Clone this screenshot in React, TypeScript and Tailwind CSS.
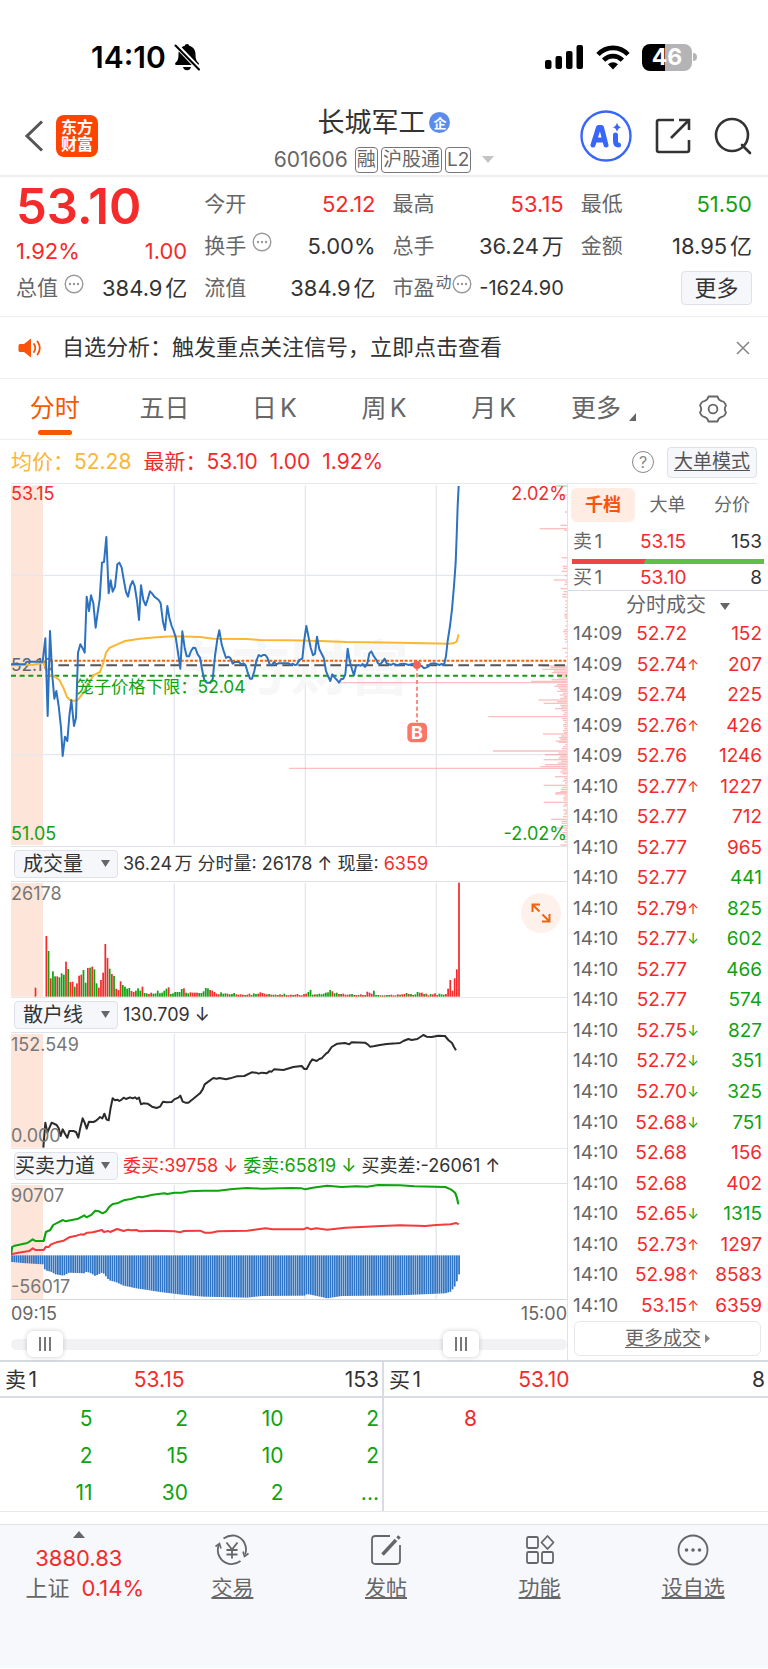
import React from "react";

type Point = [number, number];

const RED = "text-[#f52a2a]";
const GREEN = "text-[#0fa30f]";

const toPoints = (data: string) => data.trim().replace(/\s+/g, " ");

const parse = (data: string): Point[] =>
  data
    .trim()
    .split(/\s+/)
    .map((p) => p.split(",").map(Number) as Point);

const priceLine = `33,565 75,565 80,557 128,557 136,487 143,720 150,465 157,600 163,668 169,645 176,690 183,755 188,840
195,782 202,795 208,720 214,672 222,750 228,725 234,530 241,505 247,515 254,530 260,362 267,405 273,358 280,382 287,455
293,410 299,370 306,260 312,258 319,183 326,352 332,313 338,347 345,332 352,265 358,260 365,275 371,310 378,348 384,362
391,330 398,315 404,330 411,375 417,432 423,328 430,372 437,388 443,370 450,346 456,352 463,362 476,372 482,382 489,438
495,462 502,390 508,425 515,450 521,465 527,483 534,530 541,578 547,466 554,515 560,541 567,541 573,525 580,515 586,516
593,535 600,545 606,580 613,612 620,620 630,620 638,610 645,540 652,490 658,463 665,505 671,525 678,546 685,542 691,546
698,563 704,558 717,558 724,565 730,562 737,568 743,590 750,608 756,608 763,585 769,555 776,537 783,541 789,537 796,537
802,545 809,565 815,568 822,558 829,565 835,562 866,562 872,567 878,563 884,567 890,566 898,552 907,548 913,490 919,450
926,485 932,515 939,538 945,533 951,482 958,520 971,545 978,585 984,600 991,615 997,595 1004,605 1011,612 1017,620
1023,610 1030,608 1036,595 1043,518 1049,555 1056,580 1062,598 1068,570 1075,567 1082,569 1088,564 1095,573 1102,562
1108,532 1114,526 1121,540 1128,550 1134,562 1140,565 1147,558 1154,548 1160,562 1173,567 1180,563 1193,568 1200,564
1213,563 1226,567 1240,563 1251,567 1265,570 1272,577 1285,572 1292,563 1305,562 1318,567 1325,564 1332,567 1338,540
1343,495 1350,450 1356,400 1362,330 1367,260 1370,180 1373,90 1376,30`;

const averageLine = `33,568 100,566 130,560 150,598 165,602 178,612 190,635 201,663 210,672 222,675 235,670 250,650 265,625
280,598 300,588 310,560 318,530 328,516 350,506 375,495 420,488 470,484 520,481 600,483 640,488 740,489 780,492 870,493
960,495 1040,498 1200,500 1345,503 1360,502 1370,497 1376,475`;

const retailLine = `130,920 136,845 142,875 155,845 170,852 176,862 182,885 188,865 195,878 202,890 208,870 220,870 228,873
235,890 241,860 248,832 254,845 260,863 267,842 280,843 287,840 293,835 300,828 307,832 313,818 320,836 326,838 332,800
338,772 345,778 352,776 358,780 365,776 371,770 378,774 390,769 398,772 405,769 411,774 417,770 423,790 430,787 443,788
456,797 470,801 480,797 489,782 500,784 515,783 523,775 535,770 541,764 548,782 556,785 565,785 580,773 600,757 608,745
614,730 625,722 640,711 650,713 658,711 678,715 690,712 710,706 733,705 755,694 768,695 776,698 785,695 800,697 808,691
815,692 822,685 850,687 880,678 905,675 913,684 920,684 930,665 937,655 950,660 958,654 965,652 978,638 984,634 995,618
1012,608 1035,606 1048,610 1055,604 1095,605 1103,610 1110,617 1120,616 1140,612 1160,609 1190,607 1200,606 1210,600
1225,594 1235,597 1252,594 1270,582 1280,587 1295,588 1315,584 1335,585 1345,597 1356,606 1362,618 1368,628`;

const sellForce = `30,343 33,318 40,314 75,306 90,295 97,300 120,300 126,273 138,267 146,252 160,244 173,237 180,241 215,233
232,223 238,229 252,221 262,209 272,211 282,217 292,211 300,198 310,189 322,187 340,178 360,174 383,167 390,169 420,161
452,157 460,159 480,155 500,155 520,151 560,149 600,149 640,144 680,141 720,143 800,141 830,142 840,145 860,140 900,134
940,138 980,136 1010,137 1040,132 1100,133 1140,136 1225,138 1240,145 1252,155 1257,170 1261,190`;

const buyForce = `30,340 50,335 80,330 90,322 97,327 120,327 126,317 134,318 140,310 155,304 175,299 190,289 210,284 222,280
230,281 240,275 255,274 280,267 286,273 298,270 303,273 322,264 340,270 352,266 360,268 375,267 384,271 430,269 480,271
495,274 505,270 550,269 563,275 580,275 600,271 680,269 700,266 730,262 750,265 835,265 845,260 855,265 870,262 900,266
950,260 1050,255 1100,253 1170,255 1200,252 1240,250 1255,246 1262,250`;

const diffProfile = parse(`33,363 60,366 118,370 124,388 140,392 152,400 175,404 190,395 232,397 238,392 250,397 262,405
282,394 300,418 318,423 340,434 380,443 400,446 440,453 500,461 560,467 680,470 720,465 838,464 845,459 880,467 900,472
940,465 1100,463 1225,457 1240,452 1252,435 1258,418 1263,400`);

const volumes = `182r 137g 55r 76g 61g 61r 58g 70g 66g 105r 83g 44r 45r 30g 40r 63r 66r 80g 42g 86r 87g 90r 82g 40g 27r 50r
72r 158r 116r 84g 68r 62g 24r 20r 46r 35g 30g 24g 26g 17r 14r 18g 25g 18g 30r 11g 10g 8r 12r 9g 10g 18g 10g 12g 18g 24g
28r 8g 10g 14g 14g 14g 23g 25r 12g 10g 13r 12r 12r 12r 11g 11g 16g 26g 25g 20r 18r 14r 9r 7r 13g 9g 10g 9r 7g 8g 11g 7r
6r 7r 6r 5g 6r 9r 5g 10g 8g 9r 13r 11r 9r 7r 8g 6r 6g 6r 5g 7r 5r 9g 5r 4r 6r 5g 6r 8r 5r 4r 8r 9r 14g 20g 6g 7r 7g 9g
7g 9g 12g 13g 20g 16r 10g 12g 8r 8g 9r 6r 6r 7g 8g 5r 5r 5g 7r 5r 5g 15r 12r 9r 18g 5g 5g 4r 4g 4r 5g 5g 6r 4r 4g 7r 6g
7r 8r 11g 8r 8g 5r 7g 14g 12r 12r 8g 9r 4r 8g 7r 10r 5r 9g 7g 6g 8r 24r 50r 18r 55r 82r 342r`
  .trim()
  .split(/\s+/);

// price distribution on the right edge of the main chart: y, length
const chips = parse(`57,33 108,6 148,20 158,82 163,8 245,16 271,12 277,12 286,16 299,6 312,40 318,5 325,8 338,20 347,10 355,14
363,14 375,5 385,4 395,6 405,5 415,8 420,8 426,6 436,4 450,5 461,9 467,12 474,8 482,6 490,8 498,5 517,14 530,6 542,5
570,75 575,50 580,74 585,40 590,46 595,30 600,22 606,26 611,46 616,108 620,678 626,30 631,38 636,26 641,20 646,30 652,12
657,22 662,10 667,20 672,86 677,30 682,70 688,20 693,18 698,36 704,16 710,8 716,12 722,236 728,14 734,12 740,6 746,12
752,10 758,8 764,12 770,10 774,72 780,18 785,24 790,20 795,34 799,26 806,6 812,12 818,16 825,222 831,26 836,66 841,20
846,26 851,70 856,18 861,28 866,66 872,80 877,834 882,16 888,20 893,14 902,36 908,8 914,12 921,6 928,70 934,14 940,18
946,20 950,34 954,36 960,8 966,12 972,10 979,70 985,8 990,12 1002,12 1008,6 1014,10 1022,12 1030,48 1036,16 1042,16
1049,18 1056,30 1062,8 1070,14 1076,6 1082,10 1090,12 1098,8 1107,20`);

const trades: [string, string, "" | "↑" | "↓", string, "r" | "g"][] = [
  ["14:09", "52.72", "", "152", "r"],
  ["14:09", "52.74", "↑", "207", "r"],
  ["14:09", "52.74", "", "225", "r"],
  ["14:09", "52.76", "↑", "426", "r"],
  ["14:09", "52.76", "", "1246", "r"],
  ["14:10", "52.77", "↑", "1227", "r"],
  ["14:10", "52.77", "", "712", "r"],
  ["14:10", "52.77", "", "965", "r"],
  ["14:10", "52.77", "", "441", "g"],
  ["14:10", "52.79", "↑", "825", "g"],
  ["14:10", "52.77", "↓", "602", "g"],
  ["14:10", "52.77", "", "466", "g"],
  ["14:10", "52.77", "", "574", "g"],
  ["14:10", "52.75", "↓", "827", "g"],
  ["14:10", "52.72", "↓", "351", "g"],
  ["14:10", "52.70", "↓", "325", "g"],
  ["14:10", "52.68", "↓", "751", "g"],
  ["14:10", "52.68", "", "156", "r"],
  ["14:10", "52.68", "", "402", "r"],
  ["14:10", "52.65", "↓", "1315", "g"],
  ["14:10", "52.73", "↑", "1297", "r"],
  ["14:10", "52.98", "↑", "8583", "r"],
  ["14:10", "53.15", "↑", "6359", "r"],
];

const diffAt = (x: number) => {
  const i = diffProfile.findIndex((p) => p[0] >= x);
  if (i <= 0) return diffProfile[0][1];
  const [x0, y0] = diffProfile[i - 1];
  const [x1, y1] = diffProfile[i];
  return y0 + ((y1 - y0) * (x - x0)) / (x1 - x0);
};

const StatusBar = () => {
  return (
    <div className="flex h-[94px] items-center justify-between pt-5 pr-[71px] pl-[91px]">
      <div className="flex items-center gap-2">
        <span className="text-[30px] font-semibold text-black">14:10</span>
        <svg className="h-7 w-[26px]" viewBox="0 0 26 28" fill="#000">
          <path d="M13 1c1.300 0 2 .8 2.200 1.800 4 1 6.300 4.200 6.300 8.700 0 5 1.200 6.600 3 8.300.8.800.4 2.200-.8 2.200H2.300c-1.200 0-1.600-1.400-.8-2.200 1.800-1.700 3-3.300 3-8.300 0-4.500 2.300-7.700 6.300-8.700C11 1.800 11.700 1 13 1z" />
          <path d="M9 24h8c-.4 2-2 3.300-4 3.300S9.400 26 9 24z" />
          <path d="M1.500 1.500L25 26" stroke="#fff" strokeWidth="5" />
          <path d="M1.500 2.500L25 26.500" stroke="#000" strokeWidth="2" strokeLinecap="round" />
        </svg>
      </div>
      <div className="flex items-center gap-3">
        <svg className="h-6 w-[39px]" viewBox="0 0 39 24" fill="#000">
          <rect x="0" y="15" width="6.500" height="9" rx="2" />
          <rect x="10.500" y="11" width="6.500" height="13" rx="2" />
          <rect x="21" y="6" width="6.500" height="18" rx="2" />
          <rect x="31.500" y="0" width="6.500" height="24" rx="2" />
        </svg>
        <svg className="h-[25px] w-[34px]" viewBox="0 0 34 25" fill="none" stroke="#000" strokeWidth="4.600">
          <path d="M2 9.500C10.500.6 23.500.6 32 9.500" />
          <path d="M7.600 15.200c5.400-5.400 13.400-5.400 18.800 0" />
          <path d="M12 19.300c3-2.700 7-2.700 10 0L17 24.500z" fill="#000" stroke="none" />
        </svg>
        <div className="flex items-center gap-px">
          <div className="flex h-[27px] w-[50px] items-center justify-center rounded-lg bg-linear-to-r from-black from-46% to-[#b4b4b6] to-46% text-[23px] font-bold text-white">
            46
          </div>
          <div className="h-2 w-1 rounded-r-full bg-[#b4b4b6]" />
        </div>
      </div>
    </div>
  );
};

const Header = () => {
  return (
    <header className="grid h-[83px] grid-cols-[1fr_auto_1fr] items-center border-b-2 border-[#eeeeee] px-4 pt-[2px]">
      <div className="flex items-center gap-3 pl-2">
        <button aria-label="返回">
          <svg className="h-8 w-5" viewBox="0 0 20 32" fill="none" stroke="#555" strokeWidth="3">
            <path d="M18 1.500L3 16l15 14.500" />
          </svg>
        </button>
        <div className="flex h-[42px] w-[42px] flex-col items-center justify-center rounded-lg bg-[#ff4400] text-base leading-[17px] font-bold text-white">
          <span>东方</span>
          <span>财富</span>
        </div>
      </div>
      <div className="flex flex-col items-center gap-2 pt-2">
        <h1 className="flex items-center gap-1 text-[27px] leading-8 text-[#333]">
          长城军工
          <span className="flex h-[21px] w-[21px] items-center justify-center rounded-full bg-[#5b8cec] text-[13px] font-bold text-white">
            企
          </span>
        </h1>
        <button className="flex items-center gap-[3px] text-[19px] leading-6 text-[#666]">
          <span className="mr-1 text-[21px]">601606</span>
          <span className="rounded-sm border border-[#777] px-px">融</span>
          <span className="rounded-sm border border-[#777] px-px">沪股通</span>
          <span className="rounded-sm border border-[#777] px-px">L2</span>
          <svg className="ml-2 h-[7px] w-3" viewBox="0 0 12 7" fill="#c4c4c4">
            <path d="M0 0h12L6 7z" />
          </svg>
        </button>
      </div>
      <div className="flex items-center justify-end gap-[23px]">
        <button aria-label="AI 助手">
          <svg className="h-[52px] w-[52px]" viewBox="0 0 52 52">
            <circle cx="26" cy="26" r="24.500" fill="#fff" stroke="#3866fa" strokeWidth="2.400" />
            <path
              d="M13 35l5.500-17.500h3L26 35M15.500 30h8"
              fill="none"
              stroke="#3866fa"
              strokeWidth="5"
              strokeLinecap="round"
              strokeLinejoin="round"
            />
            <path d="M35.500 25v6q0 4 3 4" fill="none" stroke="#3866fa" strokeWidth="5" strokeLinecap="round" />
            <path d="M37 12.500q.8 4 4.300 4.700-3.500.8-4.300 4.800-.8-4-4.300-4.800 3.500-.7 4.300-4.700z" fill="#3866fa" />
          </svg>
        </button>
        <button aria-label="分享">
          <svg className="h-9 w-9" viewBox="0 0 36 36" fill="none" stroke="#333" strokeWidth="2.600">
            <path d="M19 2H4a2 2 0 0 0-2 2v28a2 2 0 0 0 2 2h28a2 2 0 0 0 2-2V22" />
            <path d="M16 20L33.500 2.500M24 2h10v10" />
          </svg>
        </button>
        <button aria-label="搜索">
          <svg className="h-[38px] w-[38px]" viewBox="0 0 38 38" fill="none" stroke="#333" strokeWidth="2.600">
            <circle cx="18" cy="18" r="16" />
            <path d="M28 28l8 8" strokeLinecap="round" />
          </svg>
        </button>
      </div>
    </header>
  );
};

const DotsIcon = () => {
  return (
    <svg className="mb-2 h-5 w-5 shrink-0" viewBox="0 0 20 20" fill="#999">
      <circle cx="10" cy="10" r="8.800" fill="none" stroke="#999" strokeWidth="1.400" />
      <circle cx="6" cy="10" r="1.200" />
      <circle cx="10" cy="10" r="1.200" />
      <circle cx="14" cy="10" r="1.200" />
    </svg>
  );
};

const Quote = ({
  label,
  value,
  color = "text-[#333]",
  info,
}: {
  label: string;
  value: string;
  color?: string;
  info?: boolean;
}) => {
  return (
    <div className="flex h-[42px] items-center justify-between">
      <span className="flex items-center gap-[6px] text-[21px] text-[#666]">
        {label}
        {info && <DotsIcon />}
      </span>
      <span className={`text-[22px] ${color}`}>{value}</span>
    </div>
  );
};

const Summary = () => {
  return (
    <section className="grid grid-cols-4 gap-x-[17px] border-b border-[#eeeeee] px-4 pt-[6px] pb-[7px]">
      <div>
        <div className={`h-12 text-[49px] leading-[48px] font-semibold ${RED}`}>53.10</div>
        <div className={`flex h-9 items-center justify-between pt-1 text-[22px] ${RED}`}>
          <span>1.92%</span>
          <span>1.00</span>
        </div>
        <Quote label="总值" value="384.9亿" info />
      </div>
      <div>
        <Quote label="今开" value="52.12" color={RED} />
        <Quote label="换手" value="5.00%" info />
        <Quote label="流值" value="384.9亿" />
      </div>
      <div>
        <Quote label="最高" value="53.15" color={RED} />
        <Quote label="总手" value="36.24万" />
        <div className="flex h-[42px] items-center justify-between">
          <span className="flex items-center text-[21px] text-[#666]">
            市盈<span className="mb-3 ml-px text-base">动</span>
            <DotsIcon />
          </span>
          <span className="text-[20px] text-[#333]">-1624.90</span>
        </div>
      </div>
      <div>
        <Quote label="最低" value="51.50" color={GREEN} />
        <Quote label="金额" value="18.95亿" />
        <div className="flex h-[42px] items-center justify-end">
          <button className="h-[34px] w-[71px] rounded border border-[#dfe1e8] bg-[#f6f7fb] text-[22px] leading-8 text-[#333]">
            更多
          </button>
        </div>
      </div>
    </section>
  );
};

const Notice = () => {
  return (
    <div className="flex h-[62px] items-center border-b border-[#f0f0f0] px-[18px]">
      <svg className="h-5 w-6" viewBox="0 0 24 20">
        <path d="M2 6h4l7-5.500v19L6 14H2q-1.500 0-1.500-1.500v-5Q.5 6 2 6z" fill="#fb5408" />
        <path d="M16 6q2.500 4 0 8M19.500 3.500q4.500 6.500 0 13" fill="none" stroke="#fb5408" strokeWidth="1.800" strokeLinecap="round" />
      </svg>
      <a href="#signal" className="ml-5 flex-1 text-[22px] text-[#333]">
        自选分析：触发重点关注信号，立即点击查看
      </a>
      <button aria-label="关闭">
        <svg className="h-[14px] w-[14px]" viewBox="0 0 14 14" stroke="#888" strokeWidth="1.600">
          <path d="M1 1l12 12M13 1L1 13" />
        </svg>
      </button>
    </div>
  );
};

const PeriodTabs = () => {
  return (
    <nav className="grid h-[61px] grid-cols-7 border-b border-[#eeeeee] text-[25px] text-[#666]">
      <button className="relative text-[#f55a00]">
        分时
        <span className="absolute bottom-1 left-1/2 h-[5px] w-[34px] -translate-x-1/2 rounded-sm bg-[#f55a00]" />
      </button>
      <button>五日</button>
      <button>日K</button>
      <button>周K</button>
      <button>月K</button>
      <button className="flex items-center justify-center gap-2">
        更多
        <svg className="mt-4 h-2 w-[7px]" viewBox="0 0 7 8" fill="#666">
          <path d="M7 0v8H0z" />
        </svg>
      </button>
      <button aria-label="设置" className="flex items-center justify-center">
        <svg className="h-7 w-7" viewBox="0 0 28 28" fill="none" stroke="#666" strokeWidth="1.800" strokeLinejoin="round">
          <path d="M9.500 1.500h9q1 3.800 4.200 4.600 2.800.3 4.300 4.400-2.400 3.500 0 7-1.500 4.100-4.300 4.400-3.200.8-4.200 4.600h-9q-1-3.800-4.200-4.600-2.800-.3-4.300-4.400 2.400-3.500 0-7 1.500-4.100 4.300-4.400 3.200-.8 4.200-4.600z" />
          <circle cx="14" cy="14" r="4.400" />
        </svg>
      </button>
    </nav>
  );
};

const PriceBar = () => {
  return (
    <div className="mr-[11px] ml-[11px] flex h-11 items-center justify-between border-b border-[#e6e8ee] pt-px text-[21px]">
      <div className={`flex items-center gap-3 ${RED}`}>
        <span className="text-[#fbb634]">均价：52.28</span>
        <span>最新：53.10</span>
        <span>1.00</span>
        <span>1.92%</span>
      </div>
      <div className="flex items-center gap-[13px]">
        <button aria-label="帮助" className="flex h-[22px] w-[22px] items-center justify-center rounded-full border border-[#888] text-base text-[#888]">
          ?
        </button>
        <button className="h-[31px] rounded border border-[#dfe1e8] bg-[#f6f7fb] px-[6px] text-[19px] leading-7 text-[#555] underline underline-offset-2">
          大单模式
        </button>
      </div>
    </div>
  );
};

const Grid = ({ top, bottom }: { top: number; bottom: number }) => {
  return (
    <>
      <rect x="33" y={top} width="96" height={bottom - top} fill="#fde5da" />
      {[523, 916, 1309].map((x) => (
        <line key={x} x1={x} x2={x} y1={top} y2={bottom} stroke="#e4e8ee" strokeWidth="4" />
      ))}
    </>
  );
};

const MainChart = () => {
  return (
    <div className="relative border-b border-[#dfe2e8] text-lg leading-5">
      <svg className="block h-auto w-full" viewBox="33 24 1668 1086">
        <Grid top={28} bottom={1107} />
        <path d="M33 298H1701M33 836H1701" stroke="#e4e8ee" strokeWidth="4" />
        <text x="515" y="642" fontSize="178" fontWeight="700" fill="#f7f7f8">
          东方财富
        </text>
        <text x="33" y="586" fontSize="52" fill="#666">
          52.10
        </text>
        <line x1="1667" x2="1701" y1="30" y2="30" stroke="#a8dda8" strokeWidth="4" />
        {chips.map(([y, len]) => (
          <line key={y} x1={1701 - len} x2="1701" y1={y} y2={y} stroke="#f97f7f" strokeOpacity=".5" strokeWidth="4" />
        ))}
        <path d="M150 554H1701" stroke="#f2640c" strokeWidth="6" strokeDasharray="9 5" />
        <path d="M175 568H1701" stroke="#555" strokeWidth="6" strokeDasharray="32 16" />
        <path d="M33 599H1701" stroke="#159a15" strokeWidth="6" strokeDasharray="15 11" />
        <polyline points={toPoints(averageLine)} fill="none" stroke="#fbb634" strokeWidth="6" strokeLinejoin="round" />
        <polyline points={toPoints(priceLine)} fill="none" stroke="#2d72c0" strokeWidth="6" strokeLinejoin="round" />
        <line x1="1251" x2="1251" y1="572" y2="738" stroke="#f9776b" strokeWidth="5" strokeDasharray="12 8" />
        <circle cx="1251" cy="567" r="12" fill="#f0645a" />
        <rect x="1222" y="740" width="59" height="59" rx="14" fill="#ff7468" />
        <text x="1251" y="789" fontSize="54" fontWeight="700" fill="#fff" textAnchor="middle">
          B
        </text>
        <text x="229" y="650" fontSize="52" fill="#0fa30f">
          笼子价格下限：52.04
        </text>
      </svg>
      <span className={`absolute top-0 left-0 ${RED}`}>53.15</span>
      <span className={`absolute top-0 right-0 ${RED}`}>2.02%</span>
      <span className={`absolute bottom-[2px] left-0 ${GREEN}`}>51.05</span>
      <span className={`absolute right-0 bottom-[2px] ${GREEN}`}>-2.02%</span>
    </div>
  );
};

const IndicatorBar = ({ name, tight, children }: { name: string; tight?: boolean; children: React.ReactNode }) => {
  return (
    <div className="flex h-[35px] items-center gap-[5px] border-b border-[#dfe2e8] pl-[3px] text-lg whitespace-pre text-[#333]">
      <div className="relative">
        <select
          aria-label={name}
          className={`h-7 w-[104px] appearance-none rounded border border-[#dfe1e8] bg-[#f6f7fb] text-[20px] leading-6 text-[#333] ${
            tight ? "pl-0" : "pl-2"
          }`}
        >
          <option>{name}</option>
        </select>
        <svg className="pointer-events-none absolute top-[10px] right-2 h-[7px] w-[9px]" viewBox="0 0 9 7" fill="#666">
          <path d="M0 0h9L4.500 7z" />
        </svg>
      </div>
      <div>{children}</div>
    </div>
  );
};

const VolumeChart = () => {
  return (
    <div className="relative border-b border-[#e6e8ee] text-lg leading-5 text-[#777]">
      <svg className="block h-auto w-full" viewBox="33 123 1668 345">
        <Grid top={126} bottom={467} />
        <rect x="104" y="440" width="5" height="27" fill="#f52a2a" />
        {volumes.map((v, i) => {
          const h = parseInt(v);
          return (
            <rect
              key={i}
              x={136.500 + i * 6.55}
              y={467 - h}
              width="5.200"
              height={h}
              fill={v.endsWith("r") ? "#f52a2a" : "#0fa30f"}
            />
          );
        })}
      </svg>
      <span className="absolute top-[2px] left-0">26178</span>
      <button
        aria-label="全屏"
        className="absolute top-[11px] right-[6px] flex h-10 w-10 items-center justify-center rounded-full bg-[#fef1ec]"
      >
        <svg className="h-5 w-5" viewBox="0 0 20 20" fill="none" stroke="#f2640c" strokeWidth="2">
          <path d="M1.500 9V1.500H9M2 2l6.500 6.500M18.500 11v7.500H11M18 18l-6.500-6.500" />
        </svg>
      </button>
    </div>
  );
};

const RetailChart = () => {
  return (
    <div className="relative border-b border-[#e6e8ee] text-lg leading-5 text-[#777]">
      <svg className="block h-auto w-full" viewBox="33 576 1668 345">
        <Grid top={579} bottom={920} />
        <polyline points={toPoints(retailLine)} fill="none" stroke="#2b2b2b" strokeWidth="6" strokeLinejoin="round" />
      </svg>
      <span className="absolute top-[2px] left-0">152.549</span>
      <span className="absolute bottom-[2px] left-0">0.000</span>
    </div>
  );
};

const ForceChart = () => {
  return (
    <div className="relative border-b border-[#d5d9e0] text-lg leading-5 text-[#777]">
      <svg className="block h-[115px] w-full" viewBox="30 129 1530 345" preserveAspectRatio="none">
        <rect x="30" y="132" width="88" height="343" fill="#fde5da" />
        <path d="M479.500 132V475M839.500 132V475M1200 132V475" stroke="#e4e8ee" strokeWidth="4" />
        {Array.from({ length: 206 }, (_, i) => 33 + i * 6).map((x) => (
          <rect key={x} x={x - 2.400} y="343" width="4.800" height={diffAt(x) - 343} fill="#2f74c4" />
        ))}
        <polyline points={toPoints(sellForce)} fill="none" stroke="#0fa30f" strokeWidth="6" strokeLinejoin="round" />
        <polyline points={toPoints(buyForce)} fill="none" stroke="#f53a3a" strokeWidth="6" strokeLinejoin="round" />
      </svg>
      <span className="absolute top-[2px] left-0">90707</span>
      <span className="absolute bottom-[2px] left-0">-56017</span>
    </div>
  );
};

const thumb =
  "pointer-events-none absolute inset-0 h-full w-full appearance-none bg-transparent [&::-webkit-slider-thumb]:pointer-events-auto [&::-webkit-slider-thumb]:h-[26px] [&::-webkit-slider-thumb]:w-9 [&::-webkit-slider-thumb]:appearance-none [&::-webkit-slider-thumb]:rounded-md [&::-webkit-slider-thumb]:bg-white [&::-webkit-slider-thumb]:bg-[repeating-linear-gradient(90deg,#777_0_2px,transparent_2px_5px)] [&::-webkit-slider-thumb]:bg-[length:12px_14px] [&::-webkit-slider-thumb]:bg-center [&::-webkit-slider-thumb]:bg-no-repeat [&::-webkit-slider-thumb]:shadow-[0_0_5px_rgba(0,0,0,0.2)]";

const RangeBar = () => {
  return (
    <div className="relative flex h-8 items-center">
      <div className="h-[11px] w-full rounded-full bg-[#f2f2f5]" />
      <input type="range" aria-label="开始时间" defaultValue={3} className={thumb} />
      <input type="range" aria-label="结束时间" defaultValue={83} className={thumb} />
    </div>
  );
};

const Charts = () => {
  return (
    <div className="min-w-0 border-r border-[#e0e2e8]">
      <MainChart />
      <IndicatorBar name="成交量">
        36.24万 分时量: 26178 ↑ 现量: <span className={RED}>6359</span>
      </IndicatorBar>
      <VolumeChart />
      <IndicatorBar name="散户线">130.709 ↓</IndicatorBar>
      <RetailChart />
      <IndicatorBar name="买卖力道" tight>
        <span className={RED}>委买:39758 ↓</span> <span className={GREEN}>委卖:65819 ↓</span> 买卖差:-26061 ↑
      </IndicatorBar>
      <ForceChart />
      <div className="flex h-7 items-center justify-between text-lg text-[#666]">
        <span>09:15</span>
        <span>15:00</span>
      </div>
      <RangeBar />
    </div>
  );
};

const OrderPanel = () => {
  return (
    <aside className="flex flex-col text-[19px] leading-6">
      <div className="flex justify-between pt-1 pr-1 pl-[3px] text-lg text-[#666]">
        <button className="h-[34px] w-16 rounded-md bg-[#ffece3] font-bold text-[#fb5408]">千档</button>
        <button className="h-[34px] w-16">大单</button>
        <button className="h-[34px] w-16">分价</button>
      </div>
      <div className="mt-2 grid grid-cols-[67px_1fr_1fr] pr-[6px] pl-[5px]">
        <span className="text-[#666]">卖1</span>
        <span className={RED}>53.15</span>
        <span className="text-right text-[#333]">153</span>
      </div>
      <div className="mt-[5px] mr-1 ml-1 h-[5px] bg-linear-115 from-[#ef4545] from-38% to-[#5fbf46] to-38%" />
      <div className="grid grid-cols-[67px_1fr_1fr] border-b border-[#d5d9e0] pt-[2px] pr-[6px] pl-[5px]">
        <span className="text-[#666]">买1</span>
        <span className={RED}>53.10</span>
        <span className="text-right text-[#333]">8</span>
      </div>
      <div className="flex h-[28px] items-center justify-center pl-5">
        <div className="relative">
          <select aria-label="成交类型" className="w-[104px] appearance-none text-[20px] text-[#666]">
            <option>分时成交</option>
          </select>
          <svg className="pointer-events-none absolute top-[10px] right-0 h-[7px] w-[10px]" viewBox="0 0 10 7" fill="#666">
            <path d="M0 0h10L5 7z" />
          </svg>
        </div>
      </div>
      <table className="mr-[6px] ml-[5px] h-[702px]">
        <tbody>
          {trades.map(([time, price, arrow, volume, side], i) => (
            <tr key={i}>
              <td className="w-[60px] p-0 text-[#666]">{time}</td>
              <td className={`p-0 ${RED}`}>
                <div className="flex items-center">
                  <span className="w-[54px] text-right">{price}</span>
                  <span className={`w-3 text-center text-sm ${arrow === "↓" ? GREEN : RED}`}>{arrow}</span>
                </div>
              </td>
              <td className={`p-0 text-right ${side === "r" ? RED : GREEN}`}>{volume}</td>
            </tr>
          ))}
        </tbody>
      </table>
      <button className="mx-[6px] flex h-[35px] w-[187px] items-center justify-center gap-1 rounded-md border border-[#e6e8ee] text-[#666]">
        <span className="underline underline-offset-2">更多成交</span>
        <svg className="h-[9px] w-[5px]" viewBox="0 0 5 9" fill="#888">
          <path d="M0 0v9l5-4.500z" />
        </svg>
      </button>
    </aside>
  );
};

const QueueHeader = ({ label, price, volume }: { label: string; price: string; volume: string }) => {
  return (
    <div className="grid h-9 grid-cols-3 items-center border-b-2 border-[#d9dce3] pt-[2px] pr-[3px] pl-[5px] text-[#333]">
      <span>{label}</span>
      <span className={`pl-1 ${RED}`}>{price}</span>
      <span className="text-right">{volume}</span>
    </div>
  );
};

const QueueTable = ({ rows, color }: { rows: string[][]; color: string }) => {
  return (
    <table className={`mt-[2px] w-full table-fixed text-right ${color}`}>
      <tbody>
        {rows.map((row, i) => (
          <tr key={i} className="h-[37px]">
            {row.map((cell, j) => (
              <td key={j} className="p-0 pr-[3px]">
                {cell}
              </td>
            ))}
          </tr>
        ))}
      </tbody>
    </table>
  );
};

const Queue = () => {
  return (
    <section className="grid grid-cols-2 border-t-2 border-b border-t-[#d5d9e0] border-b-[#e6e8ee] text-[21px]">
      <div className="border-r-2 border-[#d9dce3]">
        <QueueHeader label="卖1" price="53.15" volume="153" />
        <QueueTable
          color={GREEN}
          rows={[
            ["5", "2", "10", "2"],
            ["2", "15", "10", "2"],
            ["11", "30", "2", "..."],
          ]}
        />
      </div>
      <div>
        <QueueHeader label="买1" price="53.10" volume="8" />
        <QueueTable color={RED} rows={[["8", "", "", ""]]} />
      </div>
    </section>
  );
};

const NavItem = ({ label, children }: { label: string; children: React.ReactNode }) => {
  return (
    <a href="#nav" className="flex flex-col items-center gap-2 pt-[9px] pl-1 text-[21px] leading-7 text-[#666]">
      <svg className="h-8 w-9" viewBox="0 0 36 32" fill="none" stroke="#666" strokeWidth="1.800">
        {children}
      </svg>
      <span className="underline underline-offset-2">{label}</span>
    </a>
  );
};

const BottomNav = () => {
  return (
    <nav className="mt-3 grid h-[144px] grid-cols-5 border-t border-[#e0e2e8] bg-[#f7f8fb]">
      <a href="#index" className="flex flex-col items-center pt-[6px] pl-1 text-[22px] leading-[30px]">
        <svg className="mb-[5px] h-[7px] w-3" viewBox="0 0 12 7" fill="#666">
          <path d="M0 7h12L6 0z" />
        </svg>
        <span className={RED}>3880.83</span>
        <span className="flex gap-3 pl-3 text-[#666]">
          上证<span className={RED}>0.14%</span>
        </span>
      </a>
      <NavItem label="交易">
        <path d="M5 10.500a14 14 0 0 0 10 19.300q6 1.200 11.500-2.800M31 20.500a14 14 0 0 0-10-18.800Q15 .8 9.500 4.500" />
        <path d="M1.500 12.500L5.500 9.500l1.500 5M34.500 19.500l-4 3-1.500-5" strokeWidth="1.600" />
        <path d="M12.500 8.500l5.500 7 5.500-7M18 15.500v9M12.500 16h11M12.500 20.500h11" />
      </NavItem>
      <NavItem label="发帖">
        <path d="M22 2H7.500Q4 2 4 5.500v21Q4 30 7.500 30h21q3.500 0 3.500-3.500V11" />
        <path d="M14.500 20.500L28 6" strokeWidth="3.400" />
        <path d="M29.500 4.500L31.500 2.300" strokeWidth="3.400" />
      </NavItem>
      <NavItem label="功能">
        <rect x="5" y="3" width="11" height="11" rx="1.500" />
        <rect x="5" y="18" width="11" height="11" rx="1.500" />
        <rect x="20" y="18" width="11" height="11" rx="1.500" />
        <path d="M25.500 2l6 6.500-6 6.500-6-6.500z" strokeLinejoin="round" />
      </NavItem>
      <NavItem label="设自选">
        <circle cx="18" cy="16" r="14.500" />
        <g fill="#666" stroke="none">
          <circle cx="11.500" cy="16" r="1.800" />
          <circle cx="18" cy="16" r="1.800" />
          <circle cx="24.500" cy="16" r="1.800" />
        </g>
      </NavItem>
    </nav>
  );
};

const App = () => {
  return (
    <main className="min-h-screen bg-white font-[Inter,'Noto_Sans_CJK_SC',sans-serif] [text-autospace:normal]">
      <StatusBar />
      <Header />
      <Summary />
      <Notice />
      <PeriodTabs />
      <PriceBar />
      <div className="grid grid-cols-[1fr_200px] pl-[11px]">
        <Charts />
        <OrderPanel />
      </div>
      <Queue />
      <BottomNav />
    </main>
  );
};

export default App;
